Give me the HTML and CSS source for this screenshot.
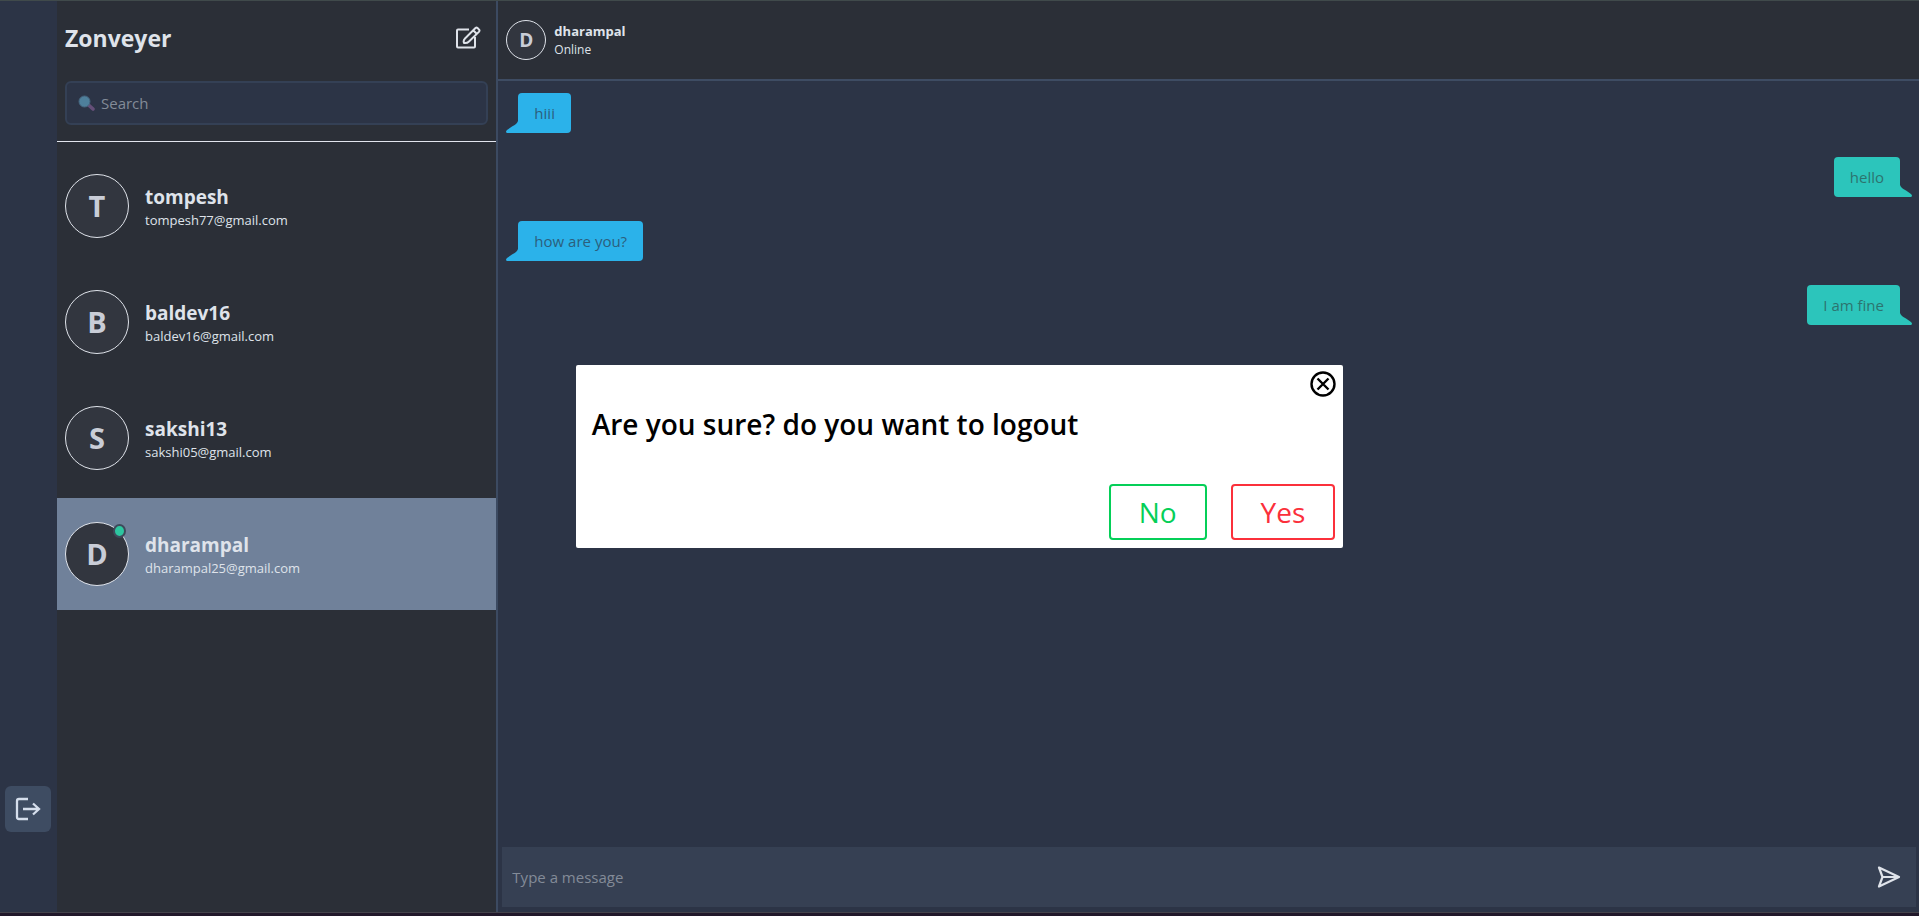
FILE: index.html
```html
<!DOCTYPE html>
<html lang="en">
<head>
<meta charset="utf-8">
<title>Zonveyer</title>
<link rel="stylesheet" href="styles.css">
</head>
<body>
<div class="app">
  <nav class="rail">
    <button class="logout" aria-label="Logout">
      <svg width="30" height="30" viewBox="0 0 30 30" fill="none" stroke="currentColor" stroke-width="2.300"><path d="M15 5H6Q4 5 4 7v16q0 2 2 2h9M10 15h16M20 9.500l6 5.500-6 5.500"/></svg>
    </button>
  </nav>

  <aside class="sidebar">
    <header class="sidebar-top">
      <div class="brand-row">
        <h1 class="brand">Zonveyer</h1>
        <button class="icon-button" aria-label="New chat">
          <svg width="26" height="26" viewBox="0 0 26 26" fill="none" stroke="currentColor" stroke-width="2" stroke-linejoin="round"><path d="M14 4.500H3Q2 4.500 2 5.500v16q0 1 1 1h16q1 0 1-1V12"/><path d="M20.500 3q1-.8 2 0l1.600 1.600q.8 1 0 2L14 16.500q-2 2-5 1.500Q8 15.500 10 13.500zM18.200 5.200l3.500 3.500"/></svg>
        </button>
      </div>
      <label class="search">
        <svg width="17" height="16" viewBox="0 0 17 16" aria-hidden="true"><path d="M10 9.500l5 4.500" stroke="#654f78" stroke-width="3.600" stroke-linecap="round"/><circle cx="6.500" cy="6.500" r="5.500" fill="#4e7f9b" stroke="#46657f"/></svg>
        <input class="search-input" type="text" placeholder="Search" aria-label="Search">
      </label>
    </header>
    <ul class="contacts">
      <li class="contact">
        <span class="avatar">T</span>
        <div class="contact-text"><h2 class="contact-name">tompesh</h2><p class="contact-mail">tompesh77@gmail.com</p></div>
      </li>
      <li class="contact">
        <span class="avatar">B</span>
        <div class="contact-text"><h2 class="contact-name">baldev16</h2><p class="contact-mail">baldev16@gmail.com</p></div>
      </li>
      <li class="contact">
        <span class="avatar">S</span>
        <div class="contact-text"><h2 class="contact-name">sakshi13</h2><p class="contact-mail">sakshi05@gmail.com</p></div>
      </li>
      <li class="contact contact-active">
        <span class="avatar avatar-online">D</span>
        <div class="contact-text"><h2 class="contact-name">dharampal</h2><p class="contact-mail">dharampal25@gmail.com</p></div>
      </li>
    </ul>
  </aside>

  <main class="chat">
    <header class="chat-header">
      <span class="avatar avatar-small">D</span>
      <div><h2 class="peer-name">dharampal</h2><p class="peer-status">Online</p></div>
    </header>
    <div class="messages">
      <p class="bubble bubble-in">hiii<svg class="tail" width="14" height="12" viewBox="0 0 14 12"><path d="M12 0Q11 3 6 5.500L1 9Q-1 11 1 12H14V0z"/></svg></p>
      <p class="bubble bubble-out">hello<svg class="tail" width="14" height="12" viewBox="0 0 14 12"><path d="M2 0Q3 3 8 5.500L13 9Q15 11 13 12H0V0z"/></svg></p>
      <p class="bubble bubble-in">how are you?<svg class="tail" width="14" height="12" viewBox="0 0 14 12"><path d="M12 0Q11 3 6 5.500L1 9Q-1 11 1 12H14V0z"/></svg></p>
      <p class="bubble bubble-out">I am fine<svg class="tail" width="14" height="12" viewBox="0 0 14 12"><path d="M2 0Q3 3 8 5.500L13 9Q15 11 13 12H0V0z"/></svg></p>
    </div>
    <form class="composer">
      <input class="composer-input" type="text" placeholder="Type a message" aria-label="Message">
      <button class="icon-button" type="button" aria-label="Send">
        <svg width="24" height="24" viewBox="0 0 24 24" fill="none" stroke="currentColor" stroke-width="2.200" stroke-linejoin="round"><path d="M2 2.500L22 12 2 21.500 5.500 12zM5.500 12H21"/></svg>
      </button>
    </form>
  </main>

  <div class="overlay">
    <section class="modal" role="dialog" aria-labelledby="modal-title">
      <button class="modal-close" aria-label="Close">
        <svg width="26" height="26" viewBox="0 0 26 26" fill="none" stroke="currentColor" stroke-width="2.400"><circle cx="13" cy="13" r="11.500"/><path d="M7.500 7.500l11 11M18.500 7.500l-11 11"/></svg>
      </button>
      <h2 class="modal-title" id="modal-title">Are you sure? do you want to logout</h2>
      <div class="modal-actions">
        <button class="choice choice-no">No</button>
        <button class="choice choice-yes">Yes</button>
      </div>
    </section>
  </div>
</div>
</body>
</html>
```
FILE: styles.css
```css
*, *::before, *::after { box-sizing: border-box; margin: 0; padding: 0; }

body {
  background: #21182a;
  color: #dfe3ea;
  font-family: "Segoe UI", "Open Sans", "Noto Sans", sans-serif;
  font-size: 15px;
  line-height: 24px;
}

button, input { font: inherit; color: inherit; background: none; border: 0; }
button { cursor: pointer; }
svg { display: block; flex: none; }

.app {
  position: relative;
  display: flex;
  height: calc(100vh - 3px);
  border-top: 1px solid #404a4b;
  border-bottom: 1px solid #44434b;
  background: #2c3446;
}

.rail {
  flex: none;
  width: 57px;
  display: flex;
  flex-direction: column;
  justify-content: flex-end;
  padding: 0 5px 80px;
}
.logout {
  width: 46px;
  height: 46px;
  padding: 8px;
  border-radius: 6px;
  background: #3e4c62;
  color: #d5deec;
}

.sidebar {
  flex: none;
  width: 23%;
  background: #2b2f37;
  border-right: 2px solid #3c4a61;
}
.sidebar-top {
  padding: 16px 8px;
  border-bottom: 1px solid #e2e5ee;
}
.brand-row {
  display: flex;
  align-items: center;
  justify-content: space-between;
  height: 42px;
  margin-bottom: 22px;
  padding-right: 7px;
}
.brand { font-size: 23px; line-height: 32px; }
.search {
  display: flex;
  align-items: center;
  gap: 6px;
  height: 44px;
  padding: 0 11px;
  border: 2px solid #344055;
  border-radius: 6px;
  background: #2c3446;
}
.search-input, .composer-input { flex: 1; min-width: 0; outline: 0; }
::placeholder { color: #838b98; opacity: 1; }

.contacts {
  display: flex;
  flex-direction: column;
  gap: 4px;
  padding-top: 8px;
  list-style: none;
}
.contact {
  display: flex;
  align-items: center;
  gap: 16px;
  padding: 24px 8px;
}
.contact-active { background: #70819a; }
.contact-name { font-size: 19px; line-height: 28px; }
.contact-mail { font-size: 13px; line-height: 18px; }

.avatar {
  position: relative;
  flex: none;
  display: flex;
  align-items: center;
  justify-content: center;
  width: 64px;
  height: 64px;
  border: 1px solid #dfe3ea;
  border-radius: 50%;
  background: #32363f;
  color: #c9cdd7;
  font-size: 29px;
  font-weight: 700;
}
.avatar-small { width: 40px; height: 40px; font-size: 19px; }
.avatar-online::after {
  content: "";
  position: absolute;
  top: 1px;
  right: 2px;
  width: 13px;
  height: 14px;
  border: 2px solid #3e4a5b;
  border-radius: 50%;
  background: #2dc6a0;
}

.chat { flex: 1; min-width: 0; display: flex; flex-direction: column; }
.chat-header {
  display: flex;
  align-items: center;
  gap: 8px;
  height: 80px;
  padding: 0 8px;
  background: #2b2f37;
  border-bottom: 2px solid #3e4c63;
}
.peer-name { font-size: 13px; line-height: 20px; }
.peer-status { font-size: 12px; line-height: 18px; }

.messages {
  flex: 1;
  display: flex;
  flex-direction: column;
  gap: 24px;
  padding: 12px 19px 12px 20px;
}
.bubble { position: relative; padding: 8px 16px; border-radius: 4px; }
.bubble-in { align-self: flex-start; background: #2bb2ea; color: #2c5f7d; fill: #2bb2ea; border-bottom-left-radius: 0; }
.bubble-out { align-self: flex-end; background: #2cc5bb; color: #2c746f; fill: #2cc5bb; border-bottom-right-radius: 0; }
.tail { position: absolute; bottom: 0; }
.bubble-in .tail { left: -12px; }
.bubble-out .tail { right: -12px; }

.composer {
  display: flex;
  align-items: center;
  height: 60px;
  margin: 0 3px 5px 4px;
  padding: 0 15px 0 10px;
  background: #364053;
}

.overlay {
  position: absolute;
  inset: 0;
  display: flex;
  align-items: center;
  justify-content: center;
}
.modal {
  display: flex;
  flex-direction: column;
  width: 40%;
  padding: 6px 8px 8px;
  border-radius: 2px;
  background: #fff;
  color: #000;
}
.modal-close { align-self: flex-end; width: 25px; height: 26px; }
.modal-title {
  padding: 7px 8px 40px;
  font-size: 28px;
  font-weight: 600;
  line-height: 40px;
}
.modal-actions { display: flex; justify-content: flex-end; gap: 24px; }
.choice {
  padding: 6px 28px;
  border: 2px solid;
  border-radius: 4px;
  font-size: 28px;
  line-height: 40px;
}
.choice-no { color: #05cf58; }
.choice-yes { color: #fb303b; }
```
